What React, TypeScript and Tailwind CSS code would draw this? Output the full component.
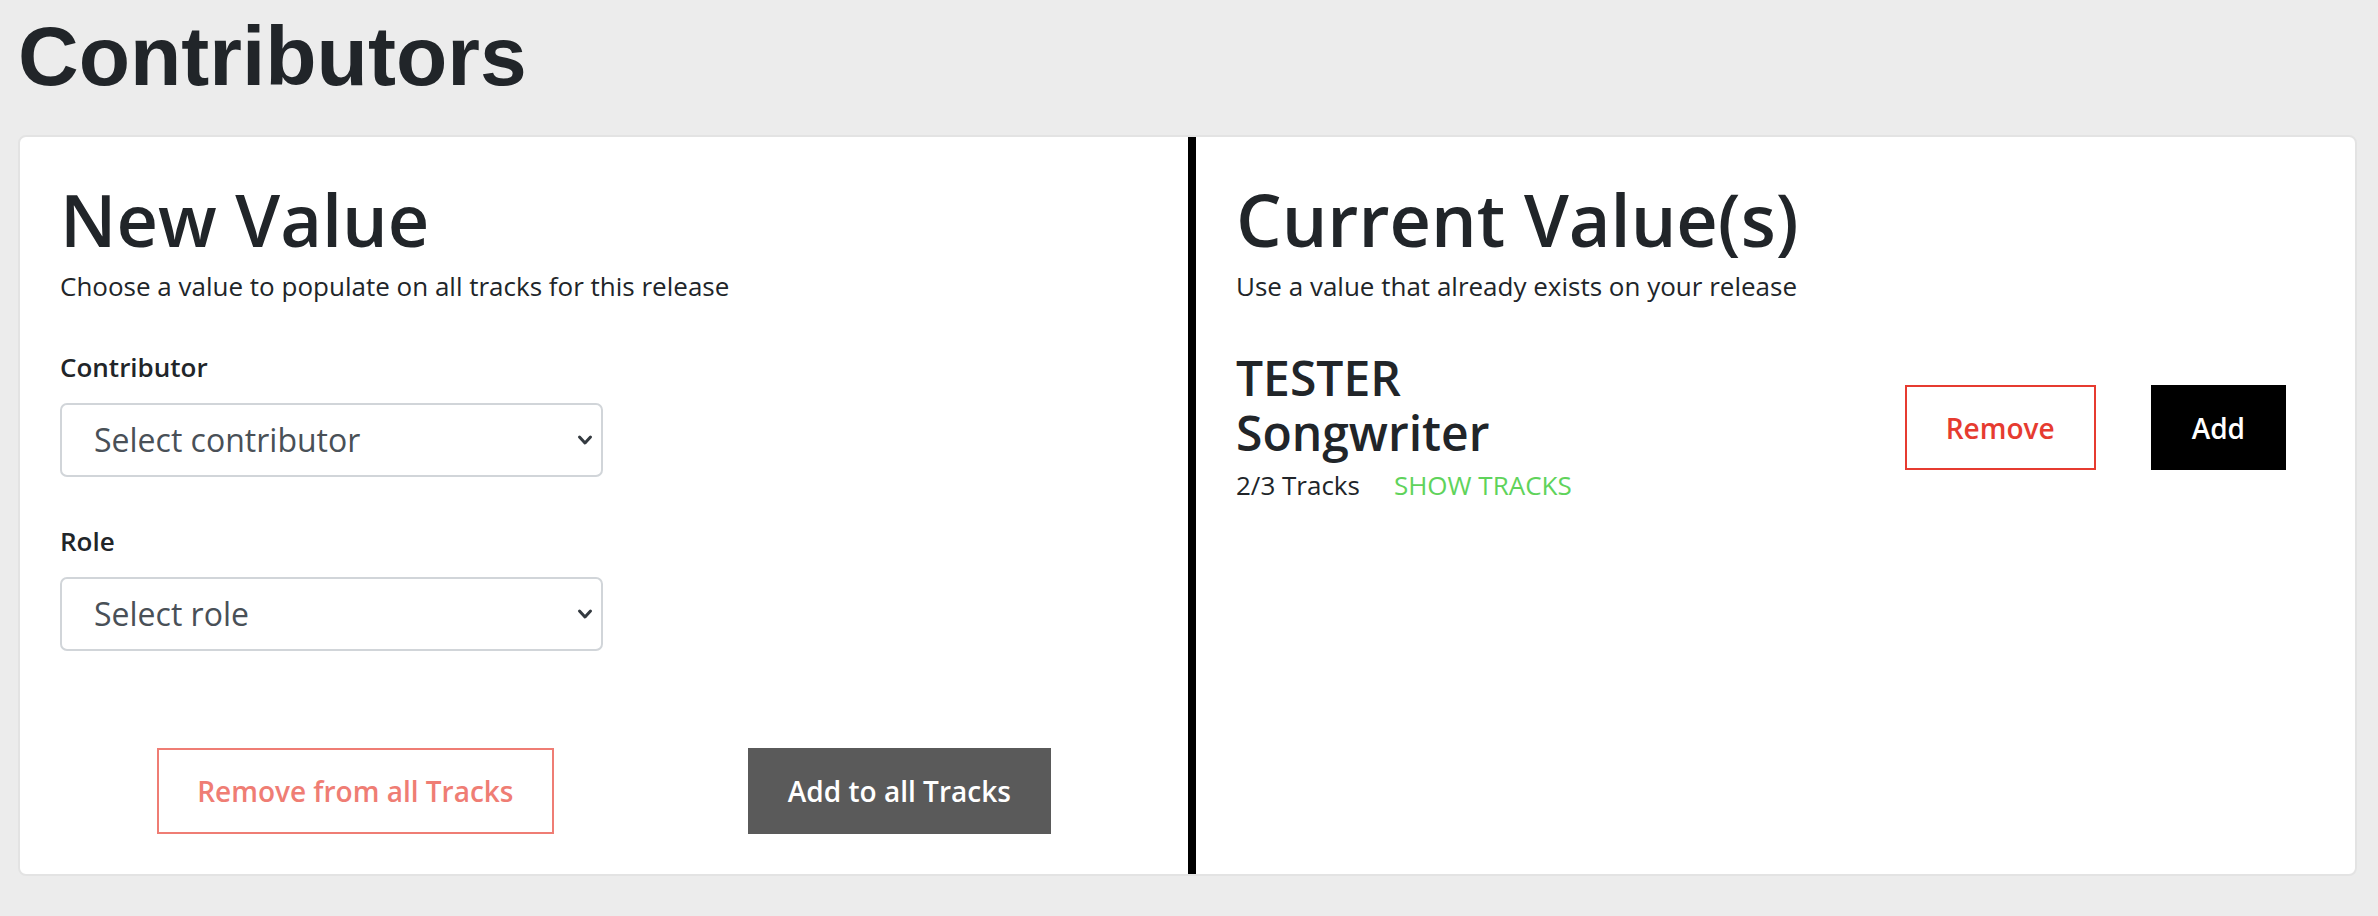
function Chevron() {
  return (
    <svg width="16" height="12" viewBox="0 0 16 12" fill="none">
      <path d="M2.5 3l5.5 6 5.5-6" stroke="#343a40" strokeWidth="3" strokeLinecap="round" strokeLinejoin="round" />
    </svg>
  );
}

function SelectField({ label, placeholder }: { label: string; placeholder: string }) {
  return (
    <div>
      <div className="text-[26px] leading-[39px] font-semibold">{label}</div>
      <div className="mt-[16px] w-[543px] h-[74px] border-2 border-[#d1d5d9] rounded-[7px] bg-white flex items-center justify-between pl-[32px] pr-[8px]">
        <span className="text-[32px] leading-[48px] text-[#495057]">{placeholder}</span>
        <Chevron />
      </div>
    </div>
  );
}

export default function App() {
  return (
    <div className="min-h-screen bg-[#ececec] pl-[18px] pr-[21px] pt-[14px] pb-[40px] font-['Open_Sans',sans-serif] text-[#212529]">
      <h1 className="font-['Liberation_Sans',Arial,sans-serif] font-bold text-[84px] leading-none">
        Contributors
      </h1>

      <div className="mt-[37px] bg-white border-2 border-[#e3e3e3] rounded-[8px] flex">
        {/* New value */}
        <div className="w-[1168px] pt-[39px] px-[40px] pb-[40px]">
          <h2 className="text-[72px] leading-[86px] font-semibold">New Value</h2>
          <p className="mt-[5px] text-[26px] leading-[39px]">
            Choose a value to populate on all tracks for this release
          </p>

          <div className="mt-[42px]">
            <SelectField label="Contributor" placeholder="Select contributor" />
          </div>
          <div className="mt-[45px]">
            <SelectField label="Role" placeholder="Select role" />
          </div>

          <div className="mt-[97px] flex justify-around">
            <button className="h-[86px] px-[38px] border-2 border-[#ef7d74] text-[#ef7d74] text-[28px] font-semibold bg-white">
              Remove from all Tracks
            </button>
            <button className="h-[86px] px-[40px] bg-[#5a5a5a] text-white text-[28px] font-semibold">
              Add to all Tracks
            </button>
          </div>
        </div>

        {/* Current values */}
        <div className="flex-1 border-l-[8px] border-black pt-[39px] px-[40px]">
          <h2 className="text-[72px] leading-[86px] font-semibold">Current Value(s)</h2>
          <p className="mt-[5px] text-[26px] leading-[39px]">
            Use a value that already exists on your release
          </p>

          <div className="mt-[44px] flex items-center">
            <div className="flex-1">
              <div className="text-[48px] leading-[55px] font-semibold">
                TESTER
                <br />
                Songwriter
              </div>
              <div className="mt-[6px] flex text-[26px] leading-[39px]">
                <span>2/3 Tracks</span>
                <span className="ml-[34px] text-[#5fd35b]">SHOW TRACKS</span>
              </div>
            </div>
            <div className="flex gap-[55px] mr-[29px]">
              <button className="h-[85px] px-[39px] border-2 border-[#e63b30] text-[#e63b30] text-[28px] font-semibold bg-white">
                Remove
              </button>
              <button className="h-[85px] px-[41px] bg-black text-white text-[28px] font-semibold">
                Add
              </button>
            </div>
          </div>
        </div>
      </div>
    </div>
  );
}
